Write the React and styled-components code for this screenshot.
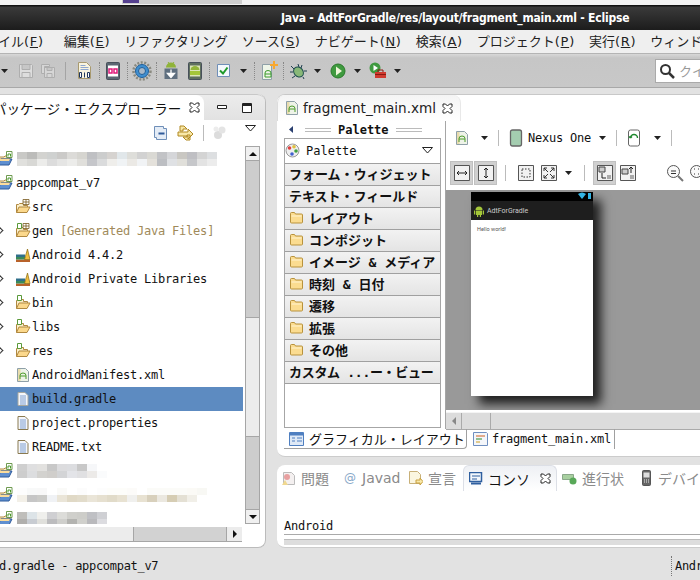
import React from 'react';
import styled, { createGlobalStyle } from 'styled-components';

const UI = `"DejaVu Sans", "Noto Sans CJK JP", sans-serif`;
const MONO = `"DejaVu Sans Mono", "Noto Sans CJK JP", monospace`;

const GlobalStyle = createGlobalStyle`
    html, body { margin: 0; padding: 0; background: #e2e2e2; }
    * { box-sizing: border-box; }
`;

/* ---------- icons ---------- */

const Svg = ({ w = 16, h = 16, children }) => (
    <svg width={w} height={h} viewBox={`0 0 ${w} ${h}`} style={{ display: 'block', flex: 'none' }}>{children}</svg>
);

const Arrow = () => <Svg w={7} h={4}><path d="M0 0h7L3.5 4z" fill="#222" /></Svg>;

const FolderOpen = ({ overlay }) => (
    <Svg>
        <path d="M1.5 13.5v-8h2l1-1h4v2h4v2" fill="#fbeec8" stroke="#b08840" />
        <path d="M1.5 13.5l2.5-5.5h11l-3 5.5z" fill="#fbd88c" stroke="#b08840" />
        {(overlay === 'pkg' || overlay === 'both') && <path d="M8 .5h6v5H8zM11 .5v5M8 3h6" fill="#fff" stroke="#7a5a20" strokeWidth=".8" />}
        {(overlay === 'gen' || overlay === 'both') && <path d="M2.500 .5h4v5h-4z" fill="#fff" stroke="#5a9a3a" />}
    </Svg>
);

const ProjectFolder = () => (
    <Svg w={15} h={16}>
        <path d="M-2 6h6l1-1h5v3H-2z" fill="#fbeec8" stroke="#b08840" />
        <path d="M-2 14l3-6h11l-3 6z" fill="#5f8fd0" stroke="#2f5a9a" />
        <path d="M-2 10l2-2h10l-1 2z" fill="#fbdc9c" />
        <path d="M6.500 .5h5.500v6h-5.500z" fill="#fff" stroke="#6f9a50" />
        <path d="M8 5.500V3h2.500v2.500" fill="none" stroke="#4a9a2a" />
    </Svg>
);

const Library = () => (
    <Svg>
        <path d="M1 12.500h14v2.500H1z" fill="#b8622a" />
        <path d="M1 10h10v2.500H1z" fill="#3a8a58" />
        <path d="M1 7.500h9V10H1z" fill="#2f6f8a" />
        <path d="M9.500 12.500l3-10.500 2.500 10.500z" fill="#f0c040" stroke="#8a6a10" strokeWidth=".7" />
    </Svg>
);

const DocLines = ({ dark }) => (
    <Svg>
        <path d="M3 1.500h7l3 3v10H3z" fill="#f4f6fb" stroke={dark ? '#8a7a50' : '#a8a8a0'} />
        <path d="M5 5h6M5 7h6M5 9h6M5 11h6M5 13h6" stroke="#7f9fd0" />
    </Svg>
);

const XmlDoc = () => (
    <Svg>
        <path d="M2.500 1.500h8l3 3v10h-11z" fill="#eef3e8" stroke="#8fa0a8" />
        <path d="M3 2h2.500v12H3z" fill="#e8dcae" />
        <path d="M5 12V8.500a3 2.500 0 0 1 6 0V12M5 9h6" fill="none" stroke="#4a9a2a" />
    </Svg>
);

const ClosePin = () => (
    <Svg w={11} h={11}>
        <path d="M1 1h2.500l2 2 2-2H10v2.500l-2 2 2 2V10H7.500l-2-2-2 2H1V7.500l2-2-2-2z" fill="#fff" stroke="#222" />
    </Svg>
);

const FolderSmall = () => (
    <Svg w={15} h={13}>
        <path d="M1.500 2.500q0-1 1-1h3l1 1.500h6q1 0 1 1v7q0 1-1 1h-10q-1 0-1-1z" fill="#fbdc90" stroke="#b8923c" />
        <path d="M2.500 5h10" stroke="#fff3d0" />
    </Svg>
);

const Android = ({ fill = '#a4c639' }) => (
    <Svg w={12} h={12}>
        <path d="M2.500 5a3.500 3.500 0 0 1 7 0z" fill={fill} />
        <path d="M3 5.500h6v4.500H3zM1 5.500h1.300v4H1zM9.700 5.500H11v4H9.700zM4 10h1.200v2H4zM6.800 10H8v2H6.800z" fill={fill} />
    </Svg>
);

const Toolbar16 = {
    save: <Svg w={16} h={16}><path d="M1.500 1.500h12l1 1v12h-13zM4 1.500v5h8v-5M4 14.500v-5h8v5" fill="#ddd" stroke="#aeaeae" /></Svg>,
    saveAll: <Svg w={16} h={16}><path d="M1.500 1.500h8v2h-5v7h-3zM4.500 4.500h10v10h-10zM7 4.500v3h5v-3M7 14.500v-4h5v4" fill="#d6d6d6" stroke="#aeaeae" /></Svg>,
    binary: (
        <Svg w={15} h={17}>
            <path d="M1.500.5h8l4 4v12h-12z" fill="#f8f4e0" stroke="#a89a70" />
            <path d="M3.500 3.500h5M3.500 5.500h8M3.500 7.500h8" stroke="#8fa8d0" />
            <path d="M2.500 10.500h2v5h-2zM7.500 10.500v5M10.500 10.500h2v5h-2z" fill="#fff" stroke="#22385f" />
        </Svg>
    ),
    device: (
        <Svg w={14} h={18}>
            <path d="M.5 1.500q0-1 1-1h11q1 0 1 1v15q0 1-1 1h-11q-1 0-1-1z" fill="#5a6672" stroke="#47505a" />
            <path d="M2 3.500h10v11H2z" fill="#fff" />
            <path d="M3 7h3v4H3zM8 7h3v4H8z" fill="none" stroke="#e0187a" strokeWidth="1.500" />
        </Svg>
    ),
    gear: (
        <Svg w={20} h={20}>
            <circle cx="10" cy="10" r="8.500" fill="none" stroke="#8a8a80" strokeWidth="2.500" strokeDasharray="2 1.500" />
            <circle cx="10" cy="10" r="6.500" fill="#3f8fd0" stroke="#1f5f9a" />
            <circle cx="10" cy="10" r="3.500" fill="#a8b8c8" stroke="#1f5f9a" />
        </Svg>
    ),
    sdk: (
        <Svg w={16} h={19}>
            <path d="M3 6.500a5 5 0 0 1 10 0z" fill="#8fb339" />
            <path d="M5 1l1.500 2M11 1L9.500 3" stroke="#8fb339" />
            <path d="M1.500 7.500h13V18h-13z" fill="#5f6f7f" />
            <path d="M8 8.500v5M4.500 12.500L8 16.500l3.500-4z" fill="#fff" stroke="#fff" strokeWidth="1.300" />
        </Svg>
    ),
    avd: (
        <Svg w={14} h={18}>
            <path d="M.5 1.500q0-1 1-1h11q1 0 1 1v15q0 1-1 1h-11q-1 0-1-1z" fill="#5f6f5f" stroke="#47505a" />
            <path d="M2 3.500h10v11H2z" fill="#dce6b8" />
            <path d="M2.500 8a4.500 4 0 0 1 9 0z" fill="#93b53a" />
            <path d="M2 9h10v4H2z" fill="#a4c639" />
        </Svg>
    ),
    check: (
        <Svg w={14} h={14}>
            <path d="M.5.500h12v12H.5z" fill="#f4f8fc" stroke="#6f8fb8" />
            <path d="M3 6.500l3 3 4.500-6" fill="none" stroke="#1f9a2a" strokeWidth="2" />
        </Svg>
    ),
    newXml: (
        <Svg w={18} h={19}>
            <path d="M2.500 3.500h9v15h-9z" fill="#eef5e8" stroke="#8fa0a8" />
            <path d="M5 16v-4a3 2.500 0 0 1 6 0v4h-6zM5 13h6" fill="none" stroke="#3a9a2a" />
            <path d="M13 0v3h-3v2h3v3h2V5h3V3h-3V0z" fill="#f8a830" />
        </Svg>
    ),
    bug: (
        <Svg w={18} h={18}>
            <ellipse cx="9.500" cy="10" rx="4.500" ry="5.500" fill="#88b878" stroke="#1f4f4f" transform="rotate(-40 9.500 10)" />
            <path d="M2 4l3 3M1 10h3M3 16l3-2M9 2l1 3M14 15l1 2M15 9h3M13 3l-1 3" stroke="#1f3f4f" />
        </Svg>
    ),
    run: (
        <Svg w={16} h={16}>
            <circle cx="8" cy="8" r="7" fill="#3f9a3f" stroke="#2a7a2a" />
            <path d="M6 3.500l6 4.500-6 4.500z" fill="#eef6d8" />
        </Svg>
    ),
    extTool: (
        <Svg w={18} h={18}>
            <circle cx="6" cy="6" r="5.500" fill="#3f9a3f" />
            <path d="M4.500 3l4.500 3-4.500 3z" fill="#fff" />
            <path d="M6 10h11v6H6z" fill="#d03a30" />
            <path d="M9 10V8h5v2M6 12.500h11" fill="none" stroke="#8a1a10" />
        </Svg>
    ),
};

const Frame16 = ({ children }) => (
    <Svg w={16} h={16}>
        <path d="M.5.500h15v15H.5z" fill="#f2f2f2" stroke="#555" />
        {children}
    </Svg>
);

/* ---------- data ---------- */

const mosaicA = [
    ['#c9c9c6', '#bcbcba', '#d3d3d0', '#cfd1d0', '#cbcac8', '#dcdbd8', '#d6d5d0', '#bfc0c3', '#cccdcd', '#d6d3d0', '#e1e7ea', '#dededa', '#d2d2d2', '#dad9d4', '#c2c3c6', '#d5d6d9', '#c9c7c2', '#bfbfc3', '#d4d4d4', '#dddfe1'],
    ['#e0e0dd', '#d8d8d5', '#ececea', '#dcdcdc', '#e5e5e4', '#ececea', '#e0dfdb', '#c5c6ca', '#dadbdc', '#efeeeb', '#f0f3f5', '#ebe9e5', '#f1f3f5', '#e4e1db', '#bcbec2', '#dfe1e4', '#e0dfda', '#c6c7ca', '#e3e3e3', '#ececec'],
];
const mosaicB = [
    ['#cfcfcf', '#dfdfe0', '#e2e1df', '#c8c8c8', '#dcdcde', '#dcdde0', '#c8c8c8', '#f6f7f9'],
    ['#cdcdcd', '#dcdddf', '#d3d2cf', '#d0cecb', '#d3d4d6', '#e3e4e8', '#e0e0e2', '#eceae8', '#fafbfc'],
];
const mosaicC = [
    ['#fdfdfd', '#f8f9f9', '#f8f8f8', '#ffffff', '#fafaf8', '#ffffff', '#fcfcfc', '#ffffff', '#fdfdfd', '#fdfdfa', '#fdfdfa', '#fcfbf9', '#ffffff', '#fbfbf8', '#fbfbf8', '#fbfbf8', '#fbfbf8', '#fbfaf6', '#f8f8f4'],
    ['#f3f0e8', '#c6c6c6', '#cbcbc8', '#f0f2f5', '#eae5d8', '#e0d9c6', '#e2dccb', '#eae5d8', '#e6e0d0', '#e1dbc9', '#e8e2d2', '#f0f0ee', '#e8e2d2', '#d8d0bc', '#ebe8e0', '#d6cdb4', '#e4e0d4', '#f1efe8'],
];
const mosaicD = [
    ['#bfbebb', '#dde4e8', '#efefec', '#cfcfd2', '#dcdcd9', '#cfcfcb', '#cdcdc9', '#bfc0c4', '#cfd0d4'],
    ['#b0afad', '#c8ccd2', '#e0e0dc', '#bcbcbe', '#cfcfcc', '#b3b3b0', '#d0d0cc', '#b9b9bc', '#dcdce0'],
];

const menus = [
    ['イル', 'F'], ['編集', 'E'], ['リファクタリング'], ['ソース', 'S'], ['ナビゲート', 'N'],
    ['検索', 'A'], ['プロジェクト', 'P'], ['実行', 'R'], ['ウィンドウ'],
];

const drawers = [
    { label: 'フォーム・ウィジェット' },
    { label: 'テキスト・フィールド' },
    { label: 'レイアウト', folder: true },
    { label: 'コンポジット', folder: true },
    { label: 'イメージ & メディア', folder: true },
    { label: '時刻 & 日付', folder: true },
    { label: '遷移', folder: true },
    { label: '拡張', folder: true },
    { label: 'その他', folder: true },
    { label: 'カスタム ...ー・ビュー', tight: true },
];

const Mosaic = ({ rows, rowH = 7 }) => (
    <svg width={200} height={rowH * rows.length} style={{ display: 'block', flex: 'none' }}>
        {rows.map((r, y) => r.map((c, x) => <rect key={`${x}-${y}`} x={x * 10} y={y * rowH} width={10} height={rowH} fill={c} />))}
    </svg>
);

const App = () => {
    return (
        <Page>
            <GlobalStyle />
            <TopStrip><StripBlock><StripMark /></StripBlock></TopStrip>
            <TitleBar>Java - AdtForGradle/res/layout/fragment_main.xml - Eclipse</TitleBar>
            <MenuBar>
                {menus.map((m, i) => (
                    <MenuItem key={i} $first={i === 0}>
                        {m[0]}{m[1] && <MenuKey>(<u>{m[1]}</u>)</MenuKey>}
                    </MenuItem>
                ))}
            </MenuBar>
            <ToolBar>
                <Slot $w={8}><Arrow /></Slot>
                <Slot $w={22} $ml={7}>{Toolbar16.save}</Slot>
                <Slot $w={22}>{Toolbar16.saveAll}</Slot>
                <ToolSep $solid $ml={6} />
                <Slot $w={30} $ml={3}>{Toolbar16.binary}</Slot>
                <ToolSep />
                <Slot $w={26}>{Toolbar16.device}</Slot>
                <ToolSep $ml={1} />
                <Slot $w={28}>{Toolbar16.gear}</Slot>
                <ToolSep />
                <Slot $w={28}>{Toolbar16.sdk}</Slot>
                <Slot $w={20}>{Toolbar16.avd}</Slot>
                <ToolSep $ml={4} />
                <Slot $w={28}>{Toolbar16.check}</Slot>
                <Slot $w={10}><Arrow /></Slot>
                <ToolSep $ml={6} />
                <Slot $w={28}>{Toolbar16.newXml}</Slot>
                <ToolSep />
                <Slot $w={28}>{Toolbar16.bug}</Slot>
                <Slot $w={10}><Arrow /></Slot>
                <Slot $w={30} $ml={1}>{Toolbar16.run}</Slot>
                <Slot $w={8}><Arrow /></Slot>
                <Slot $w={30} $ml={2}>{Toolbar16.extTool}</Slot>
                <Slot $w={8}><Arrow /></Slot>
                <SearchBox>
                    <Svg w={16} h={16}><circle cx="6.500" cy="6.500" r="4.500" fill="none" stroke="#333" strokeWidth="2" /><path d="M10 10l5 5" stroke="#333" strokeWidth="2.500" /></Svg>
                    <SearchHint>クイ</SearchHint>
                </SearchBox>
            </ToolBar>

            <Workbench>
                <Explorer>
                    <ExplorerTabs>
                        <ExplorerTab>
                            <ExplorerTitle>パッケージ・エクスプローラー</ExplorerTitle>
                            <ClosePin />
                        </ExplorerTab>
                        <WinButtons>
                            <Svg w={12} h={8}><path d="M1.500 1.500h9v3h-9z" fill="#fff" stroke="#222" /></Svg>
                            <Svg w={12} h={12}><path d="M1.500 1.500h9v9h-9z" fill="#fff" stroke="#222" /><path d="M1 3h10" stroke="#222" strokeWidth="2" /></Svg>
                        </WinButtons>
                    </ExplorerTabs>
                    <ViewTools>
                        <Svg><path d="M1.500 1.500h9v2h3v11h-10v-2h-2z" fill="#e4ecf6" stroke="#6f8fb8" /><path d="M5.500 8.500h6" stroke="#2f5a9a" strokeWidth="2" /></Svg>
                        <Svg w={18} h={16}><path d="M3 1h4l3 3H6v2H3zM13 15H9l-3-3h4v-2h3zM1 7h10V4l5 5-5 5v-3H1z" fill="#f8e8a8" stroke="#b08820" /></Svg>
                        <ViewSep />
                        <Svg><circle cx="6" cy="10" r="4" fill="#dcdcdc" /><circle cx="10" cy="5" r="3.500" fill="#e4e4e4" /><circle cx="4" cy="4" r="2.500" fill="#ececec" /></Svg>
                        <ViewMenu><Svg w={11} h={7}><path d="M.5.500h10L5.500 6z" fill="#fff" stroke="#222" /></Svg></ViewMenu>
                    </ViewTools>
                    <TreeWrap>
                        <Tree>
                            <MosaicRow><ProjectFolder /><Mosaic rows={mosaicA} /></MosaicRow>
                            <TreeRow><ProjectFolder /><Label>appcompat_v7</Label></TreeRow>
                            <TreeRow $child><FolderOpen overlay="pkg" /><Label>src</Label></TreeRow>
                            <TreeRow $child><Twisty /><FolderOpen overlay="both" /><Label>gen <Muted>[Generated Java Files]</Muted></Label></TreeRow>
                            <TreeRow $child><Twisty /><Library /><Label>Android 4.4.2</Label></TreeRow>
                            <TreeRow $child><Twisty /><Library /><Label>Android Private Libraries</Label></TreeRow>
                            <TreeRow $child><Twisty /><FolderOpen overlay="gen" /><Label>bin</Label></TreeRow>
                            <TreeRow $child><Twisty /><FolderOpen overlay="gen" /><Label>libs</Label></TreeRow>
                            <TreeRow $child><Twisty /><FolderOpen overlay="gen" /><Label>res</Label></TreeRow>
                            <TreeRow $child><XmlDoc /><Label>AndroidManifest.xml</Label></TreeRow>
                            <TreeRow $child $selected><DocLines /><Label>build.gradle</Label></TreeRow>
                            <TreeRow $child><DocLines dark /><Label>project.properties</Label></TreeRow>
                            <TreeRow $child><DocLines dark /><Label>README.txt</Label></TreeRow>
                            <MosaicRow><ProjectFolder /><Mosaic rows={mosaicB} /></MosaicRow>
                            <MosaicRow><ProjectFolder /><Mosaic rows={mosaicC} /></MosaicRow>
                            <MosaicRow><ProjectFolder /><Mosaic rows={mosaicD} /></MosaicRow>
                        </Tree>
                        <VScroll>
                            <ScrollBtn><Svg w={8} h={4}><path d="M0 4h8L4 0z" fill="#111" /></Svg></ScrollBtn>
                            <VTrack $h={156} />
                            <VThumb $h={120} />
                            <VTrack $h={72} />
                            <ScrollBtn $last><Svg w={8} h={4}><path d="M0 0h8L4 4z" fill="#111" /></Svg></ScrollBtn>
                        </VScroll>
                    </TreeWrap>
                    <HScroll>
                        <HThumb $w={133} />
                        <HTrack $w={94} />
                        <HBtn><Svg w={4} h={8}><path d="M0 0v8l4-4z" fill="#111" /></Svg></HBtn>
                    </HScroll>
                </Explorer>

                <RightColumn>
                    <Editor>
                        <EditorTabs>
                            <EditorTab><XmlDoc /><span>fragment_main.xml</span><ClosePin /></EditorTab>
                        </EditorTabs>
                        <EditorBody>
                            <PaletteCol>
                                <PaletteHead>
                                    <Svg w={5} h={7}><path d="M4 0v7L0 3.500z" fill="#2a3f70" /></Svg>
                                    <HeadLines />
                                    <PaletteTitle>Palette</PaletteTitle>
                                    <HeadLines />
                                </PaletteHead>
                                <PaletteBox>
                                    <PaletteCombo>
                                        <Svg w={15} h={15}>
                                            <circle cx="7.500" cy="7.500" r="6.500" fill="#eee" stroke="#999" />
                                            <circle cx="4.500" cy="5" r="1.800" fill="#e04040" />
                                            <circle cx="9" cy="3.800" r="1.800" fill="#e0c040" />
                                            <circle cx="11" cy="8" r="1.800" fill="#40a040" />
                                            <circle cx="7" cy="11" r="1.800" fill="#4060d0" />
                                        </Svg>
                                        <ComboText>Palette</ComboText>
                                        <Svg w={11} h={7}><path d="M.5.500h10L5.500 6z" fill="#fff" stroke="#222" /></Svg>
                                    </PaletteCombo>
                                    {drawers.map(d => (
                                        <Drawer key={d.label} $tight={d.tight}>{d.folder && <FolderSmall />}<span>{d.label}</span></Drawer>
                                    ))}
                                </PaletteBox>
                            </PaletteCol>
                            <Designer>
                                <DesignToolsTop>
                                    <Tool $w={16}><XmlDoc /></Tool>
                                    <Tool $w={12} $ml={8}><Arrow /></Tool>
                                    <DesignSep />
                                    <Tool $w={14} $ml={2}><Svg w={14} h={18}><path d="M1.500 3q0-2 2-2h7q2 0 2 2v12q0 2-2 2h-7q-2 0-2-2z" fill="#a4cdb0" stroke="#666" strokeWidth="1.300" /></Svg></Tool>
                                    <DeviceName>Nexus One</DeviceName>
                                    <Tool $w={12}><Arrow /></Tool>
                                    <DesignSep />
                                    <Tool $w={14} $ml={2}><Svg w={14} h={18}><path d="M1.500 3q0-2 2-2h7q2 0 2 2v12q0 2-2 2h-7q-2 0-2-2z" fill="#fff" stroke="#666" /><path d="M3.500 9a3.500 3.500 0 0 1 7 0M3.500 9L2 7.500M3.500 9L5 7.500" fill="none" stroke="#1f8a2f" strokeWidth="1.400" /></Svg></Tool>
                                    <Tool $w={12} $ml={10}><Arrow /></Tool>
                                    <DesignSep />
                                </DesignToolsTop>
                                <DesignToolsBottom>
                                    <Toggle $on><Frame16><path d="M3 8h10M3 8l2-2M3 8l2 2M13 8l-2-2M13 8l-2 2" stroke="#222" fill="none" /></Frame16></Toggle>
                                    <Toggle $on $ml={1}><Frame16><path d="M8 3v10M8 3L6 5M8 3l2 2M8 13l-2-2M8 13l2-2" stroke="#222" fill="none" /></Frame16></Toggle>
                                    <DesignSep />
                                    <Toggle><Frame16><path d="M4 4h8v8H4z" fill="none" stroke="#333" strokeDasharray="1.500 1.500" /></Frame16></Toggle>
                                    <Toggle><Frame16><path d="M3 3l4 4M3 3h3M3 3v3M13 3L9 7M13 3h-3M13 3v3M3 13l4-4M3 13h3M3 13v-3M13 13L9 9M13 13h-3M13 13v-3" stroke="#333" fill="none" /></Frame16></Toggle>
                                    <Tool $w={16}><Arrow /></Tool>
                                    <DesignSep />
                                    <Toggle $on><Frame16><path d="M2 2h6v5H2z" fill="#ccc" stroke="#444" /><path d="M10 10h4v4h-4z" fill="#aaa" /><path d="M5 8v5h4" fill="none" stroke="#222" /></Frame16></Toggle>
                                    <Toggle><Frame16><path d="M2 4h6v5H2z" fill="#ccc" stroke="#444" /><path d="M10 10h4v4h-4z" fill="#aaa" /><path d="M11 2v6M9 4l2-2 2 2" fill="none" stroke="#222" /></Frame16></Toggle>
                                    <ZoomIcon $ml={27}><path d="M5 7h5M5 9.500h5" stroke="#333" /></ZoomIcon>
                                    <ZoomIcon $ml={5}><path d="M5 5h1M9 5h1M5 10h1M9 10h1" stroke="#333" /></ZoomIcon>
                                </DesignToolsBottom>
                                <Canvas>
                                    <Device>
                                        <PhoneStatus>
                                            <Svg w={16} h={8}><path d="M1 2q4-3 8 0L5 7z" fill="#33b5e5" /><path d="M11 1h3v6h-3z" fill="#33b5e5" /></Svg>
                                        </PhoneStatus>
                                        <ActionBar><Android /><span>AdtForGradle</span></ActionBar>
                                        <PhoneBody>Hello world!</PhoneBody>
                                    </Device>
                                </Canvas>
                                <CanvasScroll>
                                    <HBtn $wide><Svg w={4} h={8}><path d="M4 0v8L0 4z" fill="#888" /></Svg></HBtn>
                                    <CanvasThumb />
                                </CanvasScroll>
                            </Designer>
                        </EditorBody>
                        <PageTabs>
                            <PageTabOn>
                                <Svg w={15} h={14}><path d="M.5.500h14v13H.5z" fill="#dfe9f6" stroke="#4f7fc0" /><path d="M1 1h13v2.500H1z" fill="#4f7fc0" /><path d="M3 6h3M3 9h3M8 6h5M8 9h5" stroke="#4f7fc0" /></Svg>
                                <PageTabText>グラフィカル・レイアウト</PageTabText>
                            </PageTabOn>
                            <PageTabOff>
                                <Svg w={15} h={14}><path d="M.5.500h13l1 1v12H.5z" fill="#f4f6fa" stroke="#6f8fc0" /><path d="M3 4h9" stroke="#d06020" /><path d="M3 7h6" stroke="#2a8a2a" /><path d="M3 10h4" stroke="#d0a020" /></Svg>
                                <PageTabMono>fragment_main.xml</PageTabMono>
                            </PageTabOff>
                        </PageTabs>
                    </Editor>

                    <Console>
                        <ConsoleTabs>
                            <CTab $w={63}>
                                <Svg w={15} h={15}><path d="M2.500 1.500h8l3 3v9h-11z" fill="#f4f0f0" stroke="#bbb" /><circle cx="6" cy="6" r="3" fill="#e8a0a0" /><path d="M1 14l3-5 3 5z" fill="#f0d890" /></Svg>
                                <span>問題</span>
                            </CTab>
                            <CTab $w={64}><AtSign>@</AtSign>Javad</CTab>
                            <CTab $w={59}>
                                <Svg w={15} h={16}><path d="M1.500 1.500h8l3 3v9h-11z" fill="#fbf6e0" stroke="#c8b078" /><path d="M8 10h4V8l3 3.500L12 15v-2H8z" fill="#f8e8a8" stroke="#c8a040" /></Svg>
                                宣言
                            </CTab>
                            <CTabOn>
                                <Svg w={14} h={13}><path d="M.5.500h12v9H.5z" fill="#f4f8fc" stroke="#2f5f9f" strokeWidth="1.500" /><path d="M3 4h8M3 7h5" stroke="#2f5f9f" /><path d="M2 11.500h10" stroke="#2f5f9f" strokeWidth="2" /></Svg>
                                <span>コンソ</span>
                                <ClosePin />
                            </CTabOn>
                            <CTab $w={80}>
                                <Svg w={15} h={13}><path d="M.5 2.500h11v5H.5z" fill="#a8d0a0" stroke="#8aa88a" /><circle cx="11" cy="9" r="3.500" fill="#58a858" /></Svg>
                                進行状
                            </CTab>
                            <CTab $w={70}>
                                <Svg w={11} h={16}><path d="M.5 1.500q0-1 1-1h6q1 0 1 1v13q0 1-1 1h-6q-1 0-1-1z" fill="#666" stroke="#555" /><path d="M1.500 2.500h6v5h-6z" fill="#ddd" /><path d="M2 10h1M4 10h1M6 10h1M2 12h1M4 12h1M6 12h1" stroke="#eee" /></Svg>
                                デバイ
                            </CTab>
                        </ConsoleTabs>
                        <ConsoleLine>Android</ConsoleLine>
                        <ConsoleRule />
                        <ConsoleScroll />
                    </Console>
                </RightColumn>
            </Workbench>

            <StatusBar>
                <StatusText>d.gradle - appcompat_v7</StatusText>
                <StatusEnd><StatusText>Andr</StatusText></StatusEnd>
            </StatusBar>
        </Page>
    );
};

const Page = styled.div`
    width: 700px;
    height: 580px;
    overflow: hidden;
    display: flex;
    flex-direction: column;
    background: #e2e2e2;
    font-family: ${UI};
`

const TopStrip = styled.div`
    height: 5px;
    background: #f2f2f2;
    padding-left: 122px;
`

const StripBlock = styled.div`
    width: 120px;
    height: 4px;
    background: #cfcfcf;
    padding-left: 1px;
`

const StripMark = styled.div`
    width: 16px;
    height: 3px;
    background: #55408f;
`

const TitleBar = styled.div`
    height: 25px;
    padding-left: 281px;
    background: linear-gradient(#111 0, #111 1px, #3a3a3a 2px, #1c1c1c 100%);
    color: #fff;
    font-family: "DejaVu Sans Condensed", "DejaVu Sans", sans-serif;
    font-stretch: condensed;
    font-size: 12px;
    font-weight: bold;
    letter-spacing: -0.2px;
    line-height: 26px;
    white-space: nowrap;
`

const MenuBar = styled.div`
    height: 24px;
    padding-bottom: 2px;
    display: flex;
    align-items: center;
    background: #efefef;
    border-bottom: 1px solid #b4b4b4;
    color: #222;
    font-size: 13px;
    white-space: nowrap;
`

const MenuItem = styled.div`
    margin-right: ${p => p.$first ? '20px' : '14px'};
    margin-left: ${p => p.$first ? '-2px' : '0'};
`

const MenuKey = styled.span`
    letter-spacing: 0.7px;
`

const ToolBar = styled.div`
    height: 34px;
    display: flex;
    align-items: center;
    background: linear-gradient(#d8d8d8, #c6c6c6 4px, #c8c8c8);
    border-bottom: 1px solid #a8a8a8;
`

const Slot = styled.div`
    width: ${p => p.$w}px;
    height: 24px;
    flex: none;
    margin-left: ${p => p.$ml || 0}px;
    display: flex;
    align-items: center;
    justify-content: center;
`

const ToolSep = styled.div`
    width: 1px;
    height: 18px;
    flex: none;
    margin-left: ${p => p.$ml || 0}px;
    border-left: 1px ${p => p.$solid ? 'solid #a4a4a4' : 'dotted #888'};
`

const SearchBox = styled.div`
    margin-left: auto;
    width: 45px;
    height: 24px;
    flex: none;
    display: flex;
    align-items: center;
    gap: 4px;
    padding-left: 3px;
    background: #fff;
    border: 1px solid #aaa;
    border-right: 0;
    overflow: hidden;
`

const SearchHint = styled.span`
    font-size: 13px;
    color: #999;
    white-space: nowrap;
`

const Workbench = styled.div`
    height: 460px;
    display: flex;
    gap: 11px;
    padding-top: 6px;
`

const Explorer = styled.div`
    width: 266px;
    height: 454px;
    flex: none;
    display: flex;
    flex-direction: column;
    background: #fff;
    border-right: 1px solid #bbb;
    border-bottom: 1px solid #bbb;
    border-radius: 0 8px 8px 0;
    overflow: hidden;
`

const ExplorerTabs = styled.div`
    height: 26px;
    flex: none;
    display: flex;
    background: linear-gradient(#ececec, #e2e2e2);
    border-radius: 0 8px 0 0;
    border-top: 1px solid #c8c8c8;
`

const ExplorerTab = styled.div`
    width: 204px;
    display: flex;
    align-items: center;
    gap: 8px;
    background: #fff;
    border-radius: 0 8px 0 0;
    overflow: hidden;
`

const ExplorerTitle = styled.span`
    margin-left: -7px;
    font-size: 13.5px;
    color: #111;
    white-space: nowrap;
`

const WinButtons = styled.div`
    display: flex;
    align-items: center;
    gap: 13px;
    padding-left: 12px;
`

const ViewTools = styled.div`
    height: 26px;
    flex: none;
    display: flex;
    align-items: center;
    gap: 8px;
    padding-left: 153px;
`

const ViewSep = styled.div`
    width: 1px;
    height: 16px;
    background: #bbb;
`

const ViewMenu = styled.div`
    margin: -10px 0 0 9px;
`

const TreeWrap = styled.div`
    height: 378px;
    flex: none;
    display: flex;
`

const Tree = styled.div`
    width: 245px;
    flex: none;
    overflow: hidden;
    padding-top: 1px;
`

const TreeRow = styled.div`
    position: relative;
    height: 24px;
    width: 243px;
    flex: none;
    display: flex;
    align-items: center;
    padding-left: ${p => p.$child ? '15px' : '0'};
    background: ${p => p.$selected ? '#5d8bc1' : 'transparent'};
`

const MosaicRow = styled(TreeRow)`
    svg:first-child { margin-right: 2px; }
`

const Twisty = styled.div`
    position: absolute;
    left: -5px;
    top: 8px;
    width: 7px;
    height: 7px;
    border-top: 1px solid #333;
    border-right: 1px solid #333;
    transform: rotate(45deg);
`

const Label = styled.span`
    margin-left: 1px;
    font-family: ${MONO};
    font-size: 12px;
    letter-spacing: -0.22px;
    color: #111;
    white-space: pre;
`

const Muted = styled.span`
    color: #a08a5a;
`

const VScroll = styled.div`
    width: 15px;
    height: 378px;
    flex: none;
    display: flex;
    flex-direction: column;
    border: 1px solid #a6a6a6;
    background: #cdcdcd;
`

const ScrollBtn = styled.div`
    height: 14px;
    flex: none;
    display: flex;
    align-items: center;
    justify-content: center;
    background: #f0f0f0;
    border-${p => p.$last ? 'top' : 'bottom'}: 1px solid #a6a6a6;
`

const VTrack = styled.div`
    height: ${p => p.$h}px;
    flex: none;
    background: #cdcdcd;
`

const VThumb = styled.div`
    height: ${p => p.$h}px;
    flex: none;
    background: #ececec;
    border-top: 1px solid #a6a6a6;
    border-bottom: 1px solid #a6a6a6;
`

const HScroll = styled.div`
    height: 15px;
    margin-top: 3px;
    width: 242px;
    flex: none;
    display: flex;
    background: #ececec;
    border-bottom: 1px solid #a6a6a6;
`

const HThumb = styled.div`
    width: ${p => p.$w}px;
    flex: none;
`

const HTrack = styled.div`
    width: ${p => p.$w}px;
    flex: none;
    background: #d2d2d2;
    border-left: 1px solid #a6a6a6;
    border-right: 1px solid #a6a6a6;
`

const HBtn = styled.div`
    width: ${p => p.$wide ? '14px' : '15px'};
    flex: none;
    display: flex;
    align-items: center;
    justify-content: center;
`

const RightColumn = styled.div`
    width: 423px;
    display: flex;
    flex-direction: column;
    gap: 8px;
`

const Editor = styled.div`
    height: 363px;
    flex: none;
    display: flex;
    flex-direction: column;
    background: #fff;
    border-radius: 8px 0 0 8px;
    border-bottom: 1px solid #ccc;
    border-top: 1px solid #c8c8c8;
    overflow: hidden;
`

const EditorTabs = styled.div`
    height: 26px;
    flex: none;
    display: flex;
    background: #fff;
`

const EditorTab = styled.div`
    width: 184px;
    display: flex;
    align-items: center;
    gap: 0;
    padding-left: 6px;
    font-size: 13.6px;
    color: #222;
    border-radius: 8px 8px 0 0;
    border-left: 1px solid #dcdcdc;
    border-right: 1px solid #e8e8e8;
    background: linear-gradient(#f4f4f4, #fff);
    span { margin: 0 6px 0 3px; white-space: nowrap; }
`

const EditorBody = styled.div`
    height: 308px;
    flex: none;
    display: flex;
    padding-left: 7px;
`

const PaletteCol = styled.div`
    width: 157px;
    flex: none;
    display: flex;
    flex-direction: column;
`

const PaletteHead = styled.div`
    height: 17px;
    flex: none;
    display: flex;
    align-items: center;
    gap: 11px;
    padding-left: 5px;
`

const HeadLines = styled.div`
    width: 26px;
    height: 4px;
    flex: none;
    border-top: 1px solid #bbb;
    border-bottom: 1px solid #bbb;
`

const PaletteTitle = styled.div`
    margin: 0 -4px;
    font-family: ${MONO};
    font-size: 12px;
    font-weight: bold;
    color: #111;
`

const PaletteBox = styled.div`
    height: 290px;
    flex: none;
    border: 1px solid #a6a6a6;
    overflow: hidden;
`

const PaletteCombo = styled.div`
    height: 24px;
    display: flex;
    align-items: center;
    padding: 0 7px 1px 0;
`

const ComboText = styled.span`
    flex: 1;
    margin-left: 6px;
    font-family: ${MONO};
    font-size: 12px;
    color: #111;
`

const Drawer = styled.div`
    height: 22px;
    display: flex;
    align-items: center;
    gap: 5px;
    padding: 0 0 2px 4px;
    background: linear-gradient(#f2f2f2, #e4e4e4);
    border-top: 1px solid #a0a0a0;
    font-family: ${MONO};
    font-size: 13px;
    font-weight: bold;
    letter-spacing: ${p => p.$tight ? '-0.3px' : '0'};
    color: #111;
    white-space: nowrap;
    &:last-child { height: 23px; border-bottom: 1px solid #a0a0a0; }
`

const Designer = styled.div`
    flex: 1;
    min-width: 0;
    margin-left: 4px;
    display: flex;
    flex-direction: column;
    border-left: 1px solid #a6a6a6;
`

const DesignToolsTop = styled.div`
    height: 34px;
    flex: none;
    display: flex;
    align-items: center;
    padding-left: 8px;
`

const DesignToolsBottom = styled.div`
    height: 35px;
    flex: none;
    display: flex;
    align-items: center;
    padding-left: 4px;
`

const Tool = styled.div`
    width: ${p => p.$w}px;
    flex: none;
    display: flex;
    justify-content: center;
    margin-left: ${p => p.$ml || 0}px;
`

const DesignSep = styled.div`
    width: 1px;
    height: 16px;
    flex: none;
    margin: 0 8px;
    background: #bbb;
`

const DeviceName = styled.span`
    margin: 0 5px;
    font-family: ${MONO};
    font-size: 12px;
    letter-spacing: -0.22px;
    color: #111;
`

const Toggle = styled.div`
    width: 23px;
    height: 24px;
    flex: none;
    margin-left: ${p => p.$ml || 0}px;
    display: flex;
    align-items: center;
    justify-content: center;
    background: ${p => p.$on ? '#d0d0d0' : 'transparent'};
    border: ${p => p.$on ? '1px solid #c0c0c0' : '0'};
`

const ZoomIcon = ({ $ml, children }) => (
    <Tool $w={18} $ml={$ml}>
        <Svg w={18} h={18}>
            <circle cx="7.500" cy="7.500" r="6" fill="#fafafa" stroke="#555" />
            <path d="M12 12l5 5" stroke="#777" strokeWidth="2" />
            {children}
        </Svg>
    </Tool>
);

const Canvas = styled.div`
    height: 220px;
    flex: none;
    padding: 2px 0 0 25px;
    background: #999;
    overflow: hidden;
`

const Device = styled.div`
    width: 122px;
    height: 204px;
    display: flex;
    flex-direction: column;
    background: #fff;
    box-shadow: 8px 8px 10px rgba(0, 0, 0, 0.8);
`

const PhoneStatus = styled.div`
    height: 9px;
    flex: none;
    display: flex;
    justify-content: flex-end;
    background: #000;
`

const ActionBar = styled.div`
    height: 19px;
    flex: none;
    display: flex;
    align-items: center;
    gap: 2px;
    padding-left: 2px;
    background: #1e1e1e;
    color: #ccc;
    font-family: "Roboto", sans-serif;
    font-size: 7px;
`

const PhoneBody = styled.div`
    padding: 6px 6px;
    font-family: "Roboto", sans-serif;
    font-size: 5.5px;
    color: #555;
`

const CanvasScroll = styled.div`
    height: 18px;
    flex: none;
    display: flex;
    margin-top: 2px;
    padding-left: 1px;
    background: #dcdcdc;
    border-bottom: 1px solid #aaa;
    border-top: 1px solid #f4f4f4;
`

const CanvasThumb = styled.div`
    width: 30px;
    border-left: 1px solid #aaa;
    border-right: 1px solid #aaa;
`

const PageTabs = styled.div`
    height: 20px;
    margin-left: 7px;
    flex: none;
    display: flex;
`

const PageTabOn = styled.div`
    width: 183px;
    display: flex;
    align-items: center;
    gap: 5px;
    padding-left: 5px;
    border: 1px solid #a0a0a0;
    border-top: 0;
    border-left: 0;
    border-radius: 0 0 4px 0;
`

const PageTabText = styled.span`
    font-size: 13px;
    color: #111;
    white-space: nowrap;
`

const PageTabOff = styled.div`
    width: 148px;
    display: flex;
    align-items: center;
    gap: 4px;
    padding-left: 6px;
    border-right: 1px solid #a0a0a0;
`

const PageTabMono = styled.span`
    font-family: ${MONO};
    font-size: 12px;
    letter-spacing: -0.22px;
    color: #111;
`

const Console = styled.div`
    height: 83px;
    flex: none;
    background: #fff;
    border-radius: 8px 0 0 8px;
    border-bottom: 1px solid #ccc;
    overflow: hidden;
`

const ConsoleTabs = styled.div`
    height: 26px;
    display: flex;
    align-items: flex-end;
    white-space: nowrap;
`

const CTab = styled.div`
    width: ${p => p.$w}px;
    height: 26px;
    flex: none;
    display: flex;
    align-items: center;
    gap: 5px;
    padding-left: 4px;
    color: #8a8a8a;
    font-size: 14px;
`

const AtSign = styled.span`
    color: #88a8c8;
    font-size: 12px;
    margin-right: 1px;
`

const CTabOn = styled.div`
    width: 94px;
    height: 26px;
    flex: none;
    display: flex;
    align-items: center;
    padding-left: 5px;
    margin-right: 1px;
    color: #111;
    font-size: 14px;
    background: linear-gradient(#eef0f4, #fff);
    border: 1px solid #dcdfe6;
    border-bottom: 0;
    border-radius: 6px 6px 0 0;
    span { margin: 0 10px 0 5px; }
`

const ConsoleLine = styled.div`
    margin: 28px 0 0 7px;
    font-family: ${MONO};
    font-size: 12px;
    letter-spacing: -0.22px;
    line-height: 14px;
    color: #111;
`

const ConsoleRule = styled.div`
    margin: 1px 0 0 7px;
    height: 1px;
    background: #aaa;
`

const ConsoleScroll = styled.div`
    margin: 4px 0 0 7px;
    height: 6px;
    background: #ddd;
    border-top: 1px solid #bbb;
`

const StatusBar = styled.div`
    height: 32px;
    display: flex;
    align-items: center;
    justify-content: space-between;
    background: #e2e2e2;
    padding-top: 4px;
`

const StatusText = styled.span`
    margin-left: -1px;
    font-family: ${MONO};
    font-size: 12px;
    letter-spacing: -0.3px;
    color: #111;
    white-space: nowrap;
`

const StatusEnd = styled.div`
    width: 29px;
    height: 20px;
    display: flex;
    align-items: center;
    padding-left: 4px;
    overflow: hidden;
    border-left: 1px dotted #777;
`

export default App;
